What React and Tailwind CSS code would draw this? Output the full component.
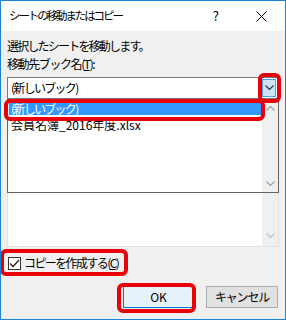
import React from 'react';

const jp = { fontFamily: '"Noto Sans CJK JP", "Noto Sans", sans-serif' };

function Chevron({ up = false, className = '' }) {
  return (
    <svg width="9" height="6" viewBox="0 0 9 6" className={className}>
      <path
        d={up ? 'M0.5 5.5 L4.5 1.5 L8.5 5.5' : 'M0.5 0.5 L4.5 4.5 L8.5 0.5'}
        fill="none"
        stroke="currentColor"
        strokeWidth="1.2"
      />
    </svg>
  );
}

function RedBox({ className }) {
  return <div className={`absolute border-[4px] border-[#e8000b] rounded-[6px] pointer-events-none ${className}`} />;
}

export default function App() {
  return (
    <div
      className="relative w-[286px] h-[320px] border border-[#1883d7] bg-[#f0f0f0] flex flex-col text-[12px] text-black overflow-hidden"
      style={jp}
    >
      {/* title bar */}
      <div className="h-[30px] bg-white flex items-center shrink-0">
        <span className="ml-[8px] text-[11.5px] tracking-[-2.1px]">シートの移動またはコピー</span>
        <span className="ml-auto mr-[37px] text-[13px]">?</span>
        <svg width="11" height="11" viewBox="0 0 11 11" className="mr-[18px]">
          <path d="M0.5 0.5 L10.5 10.5 M10.5 0.5 L0.5 10.5" stroke="#000" strokeWidth="1" />
        </svg>
      </div>

      {/* body */}
      <div className="flex-1 px-[6px] pt-[6px] flex flex-col">
        <div className="h-[18px] leading-[18px] tracking-[-1.8px]">選択したシートを移動します。</div>
        <div className="h-[18px] leading-[18px] tracking-[-1.4px]">
          移動先ブック名(<span className="underline">T</span>):
        </div>

        {/* combo box */}
        <div className="relative mt-[4px]">
          <div className="h-[22px] bg-white border border-[#7a7a7a] flex items-center">
            <span className="ml-[3px] tracking-[-1.7px]">(新しいブック)</span>
            <div className="ml-auto mr-[2px] w-[14px] h-[18px] bg-[#cce4f7] border border-[#569de5] flex items-center justify-center text-[#333]">
              <Chevron />
            </div>
          </div>

          {/* dropdown list (open) */}
          <div className="absolute left-0 top-[22px] w-full h-[94px] bg-white border border-[#646464] flex z-10">
            <div className="flex-1 pt-[3px] pl-[1px]">
              <div className="h-[12px] bg-[#3399ff] text-white flex items-center pl-[2px] tracking-[-1.7px]">(新しいブック)</div>
              <div className="h-[15px] flex items-center pl-[2px] mt-[2px] tracking-[0px]">会員名簿_2016年度.xlsx</div>
            </div>
            <div className="w-[16px] bg-[#f0f0f0] flex flex-col items-center justify-between py-[5px] text-[#a0a0a0]">
              <Chevron up />
              <Chevron />
            </div>
          </div>
        </div>

        {/* underlying list box */}
        <div className="h-[148px] bg-white border border-[#e3e3e3] flex justify-end">
          <div className="w-[16px] bg-[#f0f0f0] flex flex-col items-center justify-end pb-[7px] text-[#c0c0c0]">
            <Chevron />
          </div>
        </div>

        {/* checkbox */}
        <div className="mt-[8px] h-[16px] flex items-center">
          <div className="ml-[1px] w-[13px] h-[13px] bg-white border border-[#333] flex items-center justify-center">
            <svg width="11" height="9" viewBox="0 0 11 9">
              <path d="M1 4.5 L4 7.5 L10 1" fill="none" stroke="#222" strokeWidth="1.3" />
            </svg>
          </div>
          <span className="ml-[3px] tracking-[-1.6px]">
            コピーを作成する(<span className="underline">C</span>)
          </span>
        </div>

        {/* buttons */}
        <div className="mt-[15px] flex justify-end gap-[12px] pr-[1px]">
          <button className="w-[71px] h-[22px] bg-[#e5f1fb] border border-[#0078d7] text-[12px] font-normal">OK</button>
          <button className="w-[72px] h-[22px] bg-[#e1e1e1] border border-[#adadad] text-[12px] tracking-[-1.2px]">キャンセル</button>
        </div>
      </div>

      {/* annotation boxes */}
      <RedBox className="left-[257px] top-[72px] w-[23px] h-[30px] z-20" />
      <RedBox className="left-[3px] top-[98px] w-[261px] h-[22px] z-20" />
      <RedBox className="left-[-1px] top-[248px] w-[128px] h-[27px] z-20" />
      <RedBox className="left-[116px] top-[282px] w-[79px] h-[30px] z-20" />
    </div>
  );
}
